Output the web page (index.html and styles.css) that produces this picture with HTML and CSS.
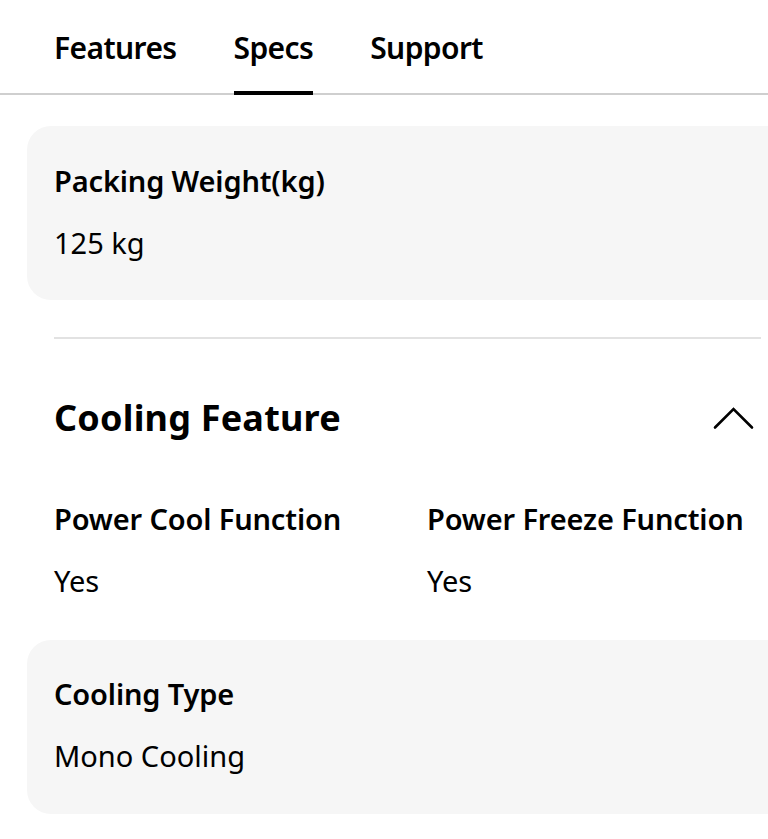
FILE: index.html
```html
<!DOCTYPE html>
<html lang="en">
<head>
<meta charset="utf-8">
<title>Specs</title>
<link rel="stylesheet" href="styles.css">
</head>
<body>
<nav class="tabs">
  <a class="tab">Features</a>
  <a class="tab active">Specs</a>
  <a class="tab">Support</a>
</nav>
<main class="content">
  <div class="card">
    <div class="label">Packing Weight(kg)</div>
    <div class="value">125 kg</div>
  </div>
  <hr class="divider">
  <section class="section">
    <div class="section-head">
      <h2 class="section-title">Cooling Feature</h2>
      <svg class="chevron" width="42" height="24" viewBox="0 0 42 24" aria-hidden="true">
        <polyline points="2,21.5 20.5,3 39,21.5" fill="none" stroke="#000" stroke-width="2.6" stroke-linecap="round" stroke-linejoin="miter"/>
      </svg>
    </div>
    <div class="pair">
      <div class="item">
        <div class="label">Power Cool Function</div>
        <div class="value">Yes</div>
      </div>
      <div class="item">
        <div class="label">Power Freeze Function</div>
        <div class="value">Yes</div>
      </div>
    </div>
    <div class="card card-b">
      <div class="label">Cooling Type</div>
      <div class="value">Mono Cooling</div>
    </div>
  </section>
</main>
</body>
</html>
```
FILE: styles.css
```css
html, body {
  margin: 0;
  padding: 0;
  background: #fff;
  overflow: hidden;
}
body {
  font-family: "Noto Sans", "Open Sans", sans-serif;
  color: #000;
  width: 768px;
  height: 839px;
}
.tabs {
  display: flex;
  gap: 57px;
  padding-left: 54px;
  height: 93px;
  border-bottom: 2px solid #cfcfcf;
}
.tab {
  position: relative;
  font-size: 30px;
  font-weight: 600;
  line-height: 30px;
  padding-top: 33px;
  letter-spacing: -0.6px;
  color: #000;
}
.tab.active::after {
  content: "";
  position: absolute;
  left: 0;
  right: 0;
  bottom: -2px;
  height: 4px;
  background: #000;
}
.content {
  padding-top: 31px;
}
.card {
  margin-left: 27px;
  width: 741px;
  box-sizing: border-box;
  background: #f6f6f6;
  border-radius: 24px 0 0 24px;
  padding: 37px 28px 39px 27px;
  display: flex;
  flex-direction: column;
  gap: 26px;
}
.label {
  font-size: 29px;
  font-weight: 600;
  line-height: 36px;
  letter-spacing: -0.15px;
}
.value {
  font-size: 29px;
  font-weight: 400;
  line-height: 36px;
  letter-spacing: 0;
}
.divider {
  border: 0;
  height: 2px;
  background: #e2e2e2;
  margin: 37px 7px 0 54px;
}
.section-head {
  display: flex;
  align-items: center;
  justify-content: space-between;
  margin: 57px 13px 0 54px;
}
.section-title {
  margin: 0;
  font-size: 36px;
  font-weight: 700;
  line-height: 44px;
  letter-spacing: 0.2px;
}
.chevron {
  display: block;
}
.pair {
  display: grid;
  grid-template-columns: 373px 1fr;
  margin: 61px 0 0 54px;
}
.item {
  display: flex;
  flex-direction: column;
  gap: 26px;
}
.card-b {
  margin-top: 41px;
  padding: 36px 28px 40px 27px;
}
```
